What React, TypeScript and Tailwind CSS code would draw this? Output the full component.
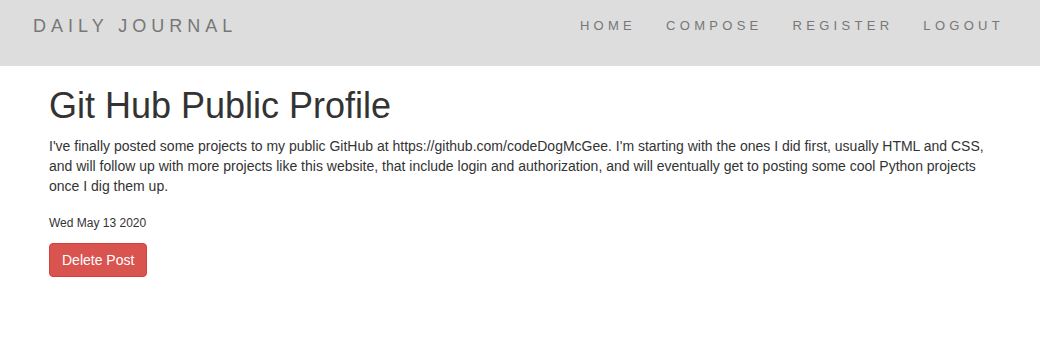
export default function App() {
  const links = ["HOME", "COMPOSE", "REGISTER", "LOGOUT"];

  return (
    <div className="min-h-screen bg-white text-[#333] font-['Liberation_Sans',Arial,sans-serif]">
      <nav className="h-[66px] bg-[#dddddd] flex justify-between items-start pl-[18px] pr-[21px]">
        <a href="#" className="block px-[15px] pt-[16px] pb-[14px] text-[18px] leading-[20px] tracking-[5px] text-[#777]">
          DAILY JOURNAL
        </a>
        <ul className="flex">
          {links.map((link) => (
            <li key={link}>
              <a href="#" className="block px-[15px] pt-[16px] pb-[14px] text-[13px] leading-[20px] tracking-[0.33em] text-[#777]">
                {link}
              </a>
            </li>
          ))}
        </ul>
      </nav>

      <div className="w-[970px] mx-auto pl-[14px] pr-[16px]">
        <h1 className="mt-[20px] mb-[10px] text-[36px] leading-[1.1] font-normal">Git Hub Public Profile</h1>
        <p className="mb-[10px] text-[14px] leading-[20px]">
          I've finally posted some projects to my public GitHub at https://github.com/codeDogMcGee. I'm starting with
          the ones I did first, usually HTML and CSS, and will follow up with more projects like this website, that
          include login and authorization, and will eventually get to posting some cool Python projects once I dig them
          up.
        </p>
        <p className="mt-[19px] text-[12px] leading-[17px]">Wed May 13 2020</p>
        <button className="mt-[11px] px-[12px] py-[6px] text-[14px] leading-[20px] text-white bg-[#d9534f] border border-[#d43f3a] rounded-[4px]">
          Delete Post
        </button>
      </div>
    </div>
  );
}
